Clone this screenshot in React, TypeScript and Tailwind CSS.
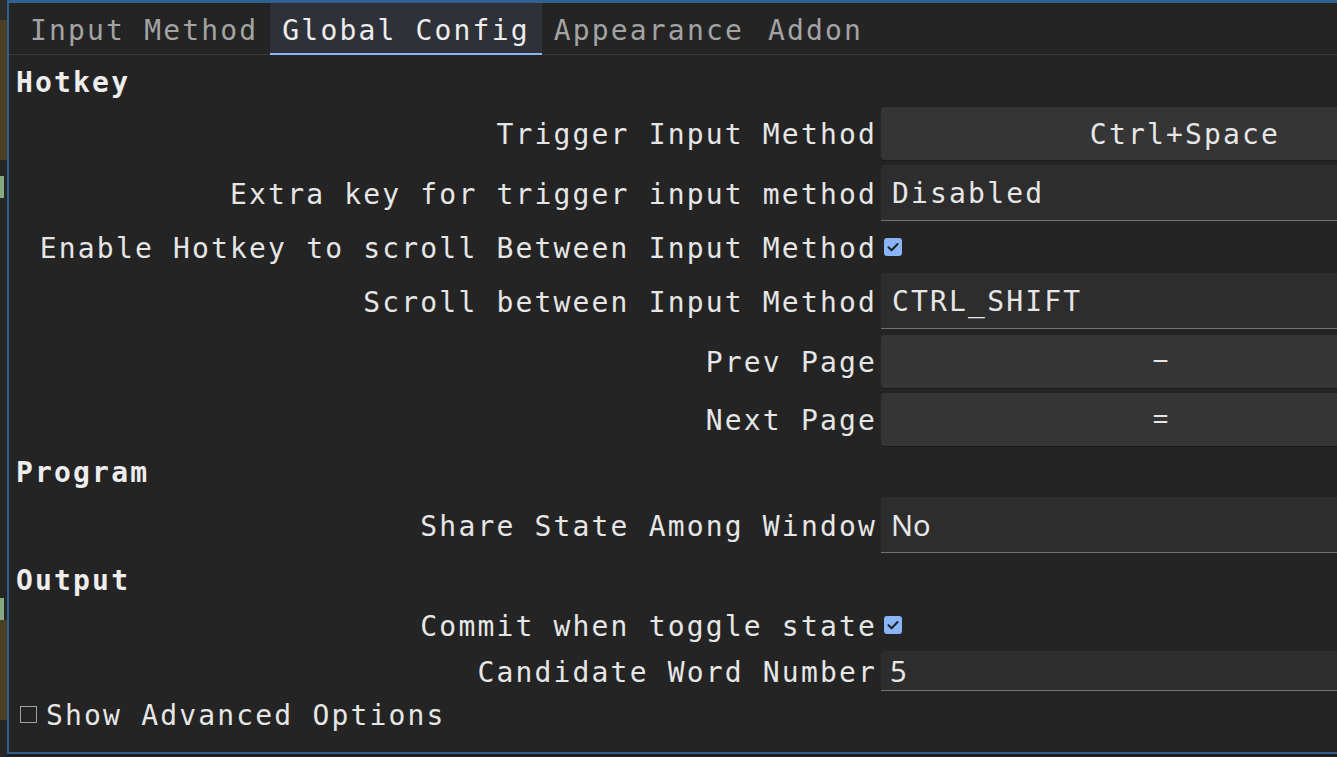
import React from "react";

const MONO = "font-['DejaVu_Sans_Mono',monospace] tracking-[2.17px]";
const SANS = "font-['Noto_Sans',sans-serif] tracking-normal text-[29px]";

function CheckedBox() {
  return (
    <div className="ml-[3px] flex h-[18px] w-[18px] items-center justify-center rounded-[3px] bg-[#8ab4f8]">
      <svg width="18" height="18" viewBox="0 0 18 18">
        <path d="M4.5 9.2 L7.6 12.2 L13.6 6" stroke="#1f2124" strokeWidth="2" fill="none" strokeLinecap="round" strokeLinejoin="round" />
      </svg>
    </div>
  );
}

function Row({ label, h, mt, children }: { label: string; h: string; mt: string; children: React.ReactNode }) {
  return (
    <div className={`flex shrink-0 ${h} ${mt}`}>
      <div className="flex w-[868px] shrink-0 items-center justify-end pt-[3px] whitespace-nowrap">{label}</div>
      <div className="ml-[4px] flex w-[559px] shrink-0 items-center">{children}</div>
    </div>
  );
}

function Combo({ children, font }: { children: React.ReactNode; font?: string }) {
  return (
    <div className={`flex h-full w-full items-center rounded-t-[4px] border-b border-[#737373] bg-[#2d2d2d] ${font ?? "pl-[11px] pt-[3px]"}`}>
      {children}
    </div>
  );
}

function KeyButton({ children, extra }: { children: React.ReactNode; extra: string }) {
  return (
    <div className={`flex h-full w-full items-center justify-center rounded-[4px] bg-[#353535] shadow-[0_1px_0_#1c1c1c] ${extra}`}>
      {children}
    </div>
  );
}

function Header({ text, mt }: { text: string; mt: string }) {
  return (
    <div className={`flex h-[34px] shrink-0 items-center pl-[7px] font-bold text-[#ededed] ${mt}`}>{text}</div>
  );
}

function Tab({ text, active }: { text: string; active?: boolean }) {
  return (
    <div
      className={`relative flex items-center px-[12px] pt-[4px] whitespace-nowrap ${
        active ? "bg-[#2e3138] text-[#ececec]" : "text-[#a3a3a3]"
      }`}
    >
      {text}
      {active && <span className="absolute bottom-[-1px] left-0 right-0 h-[2px] bg-[#8ab4f8]" />}
    </div>
  );
}

function LeftStrip() {
  return (
    <div className="flex h-[757px] w-[7px] shrink-0 flex-col bg-[#262626]">
      <div className="h-[20px] bg-[#2b2b2b]" />
      <div className="h-[140px] bg-[#4a3f22]" />
      <div className="h-[16px]" />
      <div className="h-[22px] w-[4px] bg-[#86a981]" />
      <div className="h-[400px]" />
      <div className="h-[22px] w-[4px] bg-[#86a981]" />
      <div className="h-[100px] bg-[#4a3f22]" />
    </div>
  );
}

export default function App() {
  return (
    <div className="flex h-[757px] w-[1337px] overflow-hidden bg-[#1e1e1e]">
      <LeftStrip />
      <div
        className={`flex h-[754px] min-w-0 flex-1 flex-col overflow-hidden border-l-2 border-t-[3px] border-b-2 border-[#2f6090] bg-[#242424] text-[28px] leading-normal text-[#e6e6e6] ${MONO}`}
      >
        <div className="flex h-[52px] shrink-0 border-b border-[#3a3a3a] pl-[9px]">
          <Tab text="Input Method" />
          <Tab text="Global Config" active />
          <Tab text="Appearance" />
          <Tab text="Addon" />
        </div>

        <div className="flex flex-col">
          <Header text="Hotkey" mt="mt-[11px]" />
          <Row label="Trigger Input Method" h="h-[53px]" mt="mt-[7px]">
            <KeyButton extra="pl-[49px] pt-[3px]">Ctrl+Space</KeyButton>
          </Row>
          <Row label="Extra key for trigger input method" h="h-[56px]" mt="mt-[5px]">
            <Combo>Disabled</Combo>
          </Row>
          <Row label="Enable Hotkey to scroll Between Input Method" h="h-[42px]" mt="mt-[5px]">
            <CheckedBox />
          </Row>
          <Row label="Scroll between Input Method" h="h-[56px]" mt="mt-[5px]">
            <Combo>CTRL_SHIFT</Combo>
          </Row>
          <Row label="Prev Page" h="h-[53px]" mt="mt-[6px]">
            <KeyButton extra={`pb-[3px] ${SANS}`}>−</KeyButton>
          </Row>
          <Row label="Next Page" h="h-[53px]" mt="mt-[5px]">
            <KeyButton extra={`pb-[3px] ${SANS}`}>=</KeyButton>
          </Row>

          <Header text="Program" mt="mt-[10px]" />
          <Row label="Share State Among Window" h="h-[56px]" mt="mt-[7px]">
            <Combo font={`pl-[10px] ${SANS}`}>No</Combo>
          </Row>

          <Header text="Output" mt="mt-[11px]" />
          <Row label="Commit when toggle state" h="h-[42px]" mt="mt-[6px]">
            <CheckedBox />
          </Row>
          <Row label="Candidate Word Number" h="h-[40px]" mt="mt-[5px]">
            <Combo font={`pl-[9px] ${SANS}`}>5</Combo>
          </Row>

          <div className="mt-[6px] flex h-[34px] shrink-0 items-center pl-[11px]">
            <div className="h-[17px] w-[17px] border-[1.5px] border-[#a0a0a0]" />
            <span className="ml-[9px] pt-[3px] whitespace-nowrap">Show Advanced Options</span>
          </div>
        </div>
      </div>
    </div>
  );
}
